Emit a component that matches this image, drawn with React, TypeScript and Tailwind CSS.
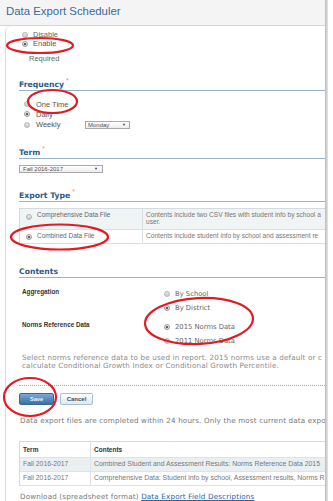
import React from "react";

function Radio({ checked, className = "" }: { checked?: boolean; className?: string }) {
  if (checked) {
    return (
      <span className={"flex shrink-0 w-[6px] h-[6px] rounded-full border border-[#9a9a9a] bg-linear-to-b from-[#f4f4f4] to-[#cfcfcf] items-center justify-center " + className}>
        <span className="block w-[2px] h-[2px] rounded-full bg-[#333]" />
      </span>
    );
  }
  return (
    <span className={"block shrink-0 w-[6px] h-[6px] rounded-full border border-[#b4b4b4] bg-linear-to-b from-[#e9e9e9] to-[#c9c9c9] " + className} />
  );
}

function Heading({ children }: { children: React.ReactNode }) {
  return (
    <div className="h-[12px] border-b border-[#9ab1c6] flex items-start">
      <span className="font-['DejaVu_Sans',Verdana,sans-serif] font-bold text-[7.7px] leading-[11px] text-[#2c5a89]">
        {children}
      </span>
      <span className="text-[#f29a3a] text-[7px] leading-[7px] ml-[2px] mt-[-2px]">*</span>
    </div>
  );
}

export default function App() {
  return (
    <div className="relative w-[333px] h-[501px] overflow-hidden bg-white font-['Liberation_Sans',Arial,sans-serif]">
      <div className="flex">
        <div className="w-[325px] h-[501px] overflow-hidden">
          {/* header */}
          <div className="h-[26px] bg-[#f4f4f4] border-b border-[#d4d4d4] pl-[6px] pt-[5px]">
            <div className="text-[11.4px] leading-[13px] text-[#3a6b9d]">Data Export Scheduler</div>
          </div>

          {/* panel */}
          <div className="ml-[5px] border-l border-[#dcdcdc] rounded-tl-[6px] pl-[13px] h-[475px]">
            {/* status */}
            <div className="pt-[4px]">
              <div className="h-[9px] flex items-center pl-[3px] gap-[5px]">
                <Radio />
                <span className="text-[7.5px] leading-[9px] text-[#666]">Disable</span>
              </div>
              <div className="h-[9px] flex items-center pl-[3px] gap-[5px]">
                <Radio checked />
                <span className="text-[7.5px] leading-[9px] text-[#555]">Enable</span>
              </div>
              <div className="h-[6px] pl-[4px] pt-[2px] text-[#f29a3a] text-[8px] leading-[8px]">*</div>
              <div className="h-[9px] pl-[10px] text-[7.5px] leading-[9px] text-[#666]">Required</div>
            </div>

            {/* frequency */}
            <div className="mt-[16px]">
              <Heading>Frequency</Heading>
            </div>
            <div className="mt-[8px]">
              <div className="h-[10px] flex items-center pl-[5px] gap-[6px]">
                <Radio />
                <span className="text-[7.5px] leading-[9px] text-[#555]">One Time</span>
              </div>
              <div className="h-[10px] flex items-center pl-[5px] gap-[6px]">
                <Radio checked />
                <span className="text-[7.5px] leading-[9px] text-[#555]">Daily</span>
              </div>
              <div className="h-[11px] flex items-center pl-[5px] gap-[6px]">
                <Radio />
                <span className="w-[43px] text-[7.5px] leading-[9px] text-[#555]">Weekly</span>
                <div className="w-[45px] h-[8px] border border-[#a9a9a9] bg-linear-to-b from-white to-[#ececec] flex items-center justify-between pl-[2px] pr-[3px]">
                  <span className="text-[6px] leading-[6px] text-[#555]">Monday</span>
                  <span className="text-[4px] leading-[4px] text-[#444]">▼</span>
                </div>
              </div>
            </div>

            {/* term */}
            <div className="mt-[17px]">
              <Heading>Term</Heading>
            </div>
            <div className="mt-[6px] w-[84px] h-[8px] border border-[#a9a9a9] bg-linear-to-b from-white to-[#ececec] flex items-center justify-between pl-[3px] pr-[4px]">
              <span className="text-[6px] leading-[6px] text-[#555]">Fall 2016-2017</span>
              <span className="text-[4px] leading-[4px] text-[#444]">▼</span>
            </div>

            {/* export type */}
            <div className="mt-[17px]">
              <Heading>Export Type</Heading>
            </div>
            <div className="mt-[6px] border-t border-l border-[#d3dbe0]">
              <div className="flex h-[21px] bg-[#f0f4f5] border-b border-[#d9e0e3]">
                <div className="w-[123px] shrink-0 border-r border-[#d9e0e3] flex items-start pt-[3px] pl-[6px] gap-[5px]">
                  <Radio className="mt-[2px]" />
                  <span className="text-[6.5px] leading-[6.5px] text-[#666] whitespace-nowrap">Comprehensive Data File</span>
                </div>
                <div className="pl-[3px] pt-[3px] text-[6.6px] leading-[6.5px] text-[#777] whitespace-nowrap">
                  <div>Contents include two CSV files with student info by school a</div>
                  <div>user.</div>
                </div>
              </div>
              <div className="flex h-[14px] border-b border-[#d9e0e3]">
                <div className="w-[123px] shrink-0 border-r border-[#d9e0e3] flex items-start pt-[3px] pl-[6px] gap-[5px]">
                  <Radio checked className="mt-[1px]" />
                  <span className="text-[6.5px] leading-[6.5px] text-[#666] whitespace-nowrap">Combined Data File</span>
                </div>
                <div className="pl-[3px] pt-[3px] text-[6.6px] leading-[6.5px] text-[#777] whitespace-nowrap">
                  Contents include student info by school and assessment re
                </div>
              </div>
            </div>

            {/* contents */}
            <div className="mt-[22px]">
              <div className="h-[12px] border-b border-[#9ab1c6] flex items-start">
                <span className="font-['DejaVu_Sans',Verdana,sans-serif] font-bold text-[7.7px] leading-[11px] text-[#2c5a89]">
                  Contents
                </span>
              </div>
            </div>
            <div className="mt-[9px] flex">
              <div className="w-[145px] shrink-0 pl-[3px] text-[6.3px] leading-[10px] font-bold text-[#333]">Aggregation</div>
              <div>
                <div className="h-[14px] flex items-center gap-[5px]">
                  <Radio />
                  <span className="font-['DejaVu_Sans',Verdana,sans-serif] text-[6.8px] leading-[8px] text-[#666]">By School</span>
                </div>
                <div className="h-[14px] flex items-center gap-[5px]">
                  <Radio checked />
                  <span className="font-['DejaVu_Sans',Verdana,sans-serif] text-[6.8px] leading-[8px] text-[#666]">By District</span>
                </div>
              </div>
            </div>
            <div className="mt-[5px] flex">
              <div className="w-[145px] shrink-0 pl-[3px] text-[6.3px] leading-[10px] font-bold text-[#333]">Norms Reference Data</div>
              <div>
                <div className="h-[14px] flex items-center gap-[5px]">
                  <Radio checked />
                  <span className="font-['DejaVu_Sans',Verdana,sans-serif] text-[6.8px] leading-[8px] text-[#666]">2015 Norms Data</span>
                </div>
                <div className="h-[14px] flex items-center gap-[5px]">
                  <Radio />
                  <span className="font-['DejaVu_Sans',Verdana,sans-serif] text-[6.8px] leading-[8px] text-[#666]">2011 Norms Data</span>
                </div>
              </div>
            </div>

            {/* description */}
            <div className="mt-[6px] pl-[3px] font-['DejaVu_Sans',Verdana,sans-serif] text-[7.2px] tracking-[0.15px] leading-[7.5px] text-[#8a8a8a] whitespace-nowrap">
              <div>Select norms reference data to be used in report. 2015 norms use a default or c</div>
              <div>calculate Conditional Growth Index or Conditional Growth Percentile.</div>
            </div>

            <div className="mt-[16px] border-t border-dotted border-[#a8a8a8]" />

            {/* buttons */}
            <div className="mt-[7px] flex gap-[6px]">
              <div className="w-[35px] h-[12px] rounded-[2px] border border-[#386996] bg-linear-to-b from-[#7aaad4] to-[#3b70a5] flex items-center justify-center">
                <span className="text-[5.6px] leading-[6px] font-bold text-[#eef4fa]">Save</span>
              </div>
              <div className="w-[33px] h-[12px] rounded-[2px] border border-[#a9bdd2] bg-linear-to-b from-white to-[#dfe8f1] flex items-center justify-center">
                <span className="text-[6px] leading-[6px] font-bold text-[#3d4e66]">Cancel</span>
              </div>
            </div>

            {/* info */}
            <div className="mt-[12px] pl-[1px] font-['DejaVu_Sans',Verdana,sans-serif] text-[7.2px] tracking-[0.15px] leading-[8px] text-[#777] whitespace-nowrap">
              Data export files are completed within 24 hours. Only the most current data expo
            </div>

            {/* files table */}
            <div className="mt-[16px] border-t border-l border-[#d3dbe0]">
              <div className="flex h-[16px] border-b border-[#dde3e6]">
                <div className="w-[71px] shrink-0 border-r border-[#dde3e6] pl-[3px] flex items-center text-[6.5px] font-bold text-[#333]">Term</div>
                <div className="pl-[3px] flex items-center text-[6.5px] font-bold text-[#333]">Contents</div>
              </div>
              <div className="flex h-[14px] bg-[#eaf0f1] border-b border-[#dde3e6]">
                <div className="w-[71px] shrink-0 border-r border-[#dde3e6] pl-[3px] flex items-center text-[6.8px] text-[#777] whitespace-nowrap">Fall 2016-2017</div>
                <div className="pl-[3px] flex items-center text-[6.9px] text-[#777] whitespace-nowrap">Combined Student and Assessment Results: Norms Reference Data 2015</div>
              </div>
              <div className="flex h-[14px] border-b border-[#dde3e6]">
                <div className="w-[71px] shrink-0 border-r border-[#dde3e6] pl-[3px] flex items-center text-[6.8px] text-[#777] whitespace-nowrap">Fall 2016-2017</div>
                <div className="pl-[3px] flex items-center text-[6.9px] text-[#777] whitespace-nowrap">Comprehensive Data: Student info by school, Assessment results, Norms R</div>
              </div>
            </div>

            <div className="mt-[6px] pl-[1px] font-['DejaVu_Sans',Verdana,sans-serif] text-[7.2px] tracking-[0.15px] leading-[9px] text-[#777] whitespace-nowrap">
              Download (spreadsheet format) <span className="text-[#2a64a6] underline">Data Export Field Descriptions</span>
            </div>
          </div>
        </div>
        <div className="w-[3px] h-[501px] bg-linear-to-r from-[#b9b9b9] to-[#e6e6e6]" />
      </div>

      {/* annotation ellipses */}
      <svg className="absolute inset-0 pointer-events-none" width="333" height="501" viewBox="0 0 333 501">
        <g fill="none" stroke="#e01b22" strokeWidth="2.2">
          <ellipse cx="40" cy="45.5" rx="33" ry="7.5" />
          <ellipse cx="52.5" cy="101.5" rx="24.5" ry="11.5" />
          <ellipse cx="59.5" cy="237" rx="48.5" ry="12.5" />
          <ellipse cx="199" cy="321" rx="54" ry="23" transform="rotate(-3 199 321)" />
          <ellipse cx="30" cy="397" rx="26" ry="19" />
        </g>
      </svg>
    </div>
  );
}
